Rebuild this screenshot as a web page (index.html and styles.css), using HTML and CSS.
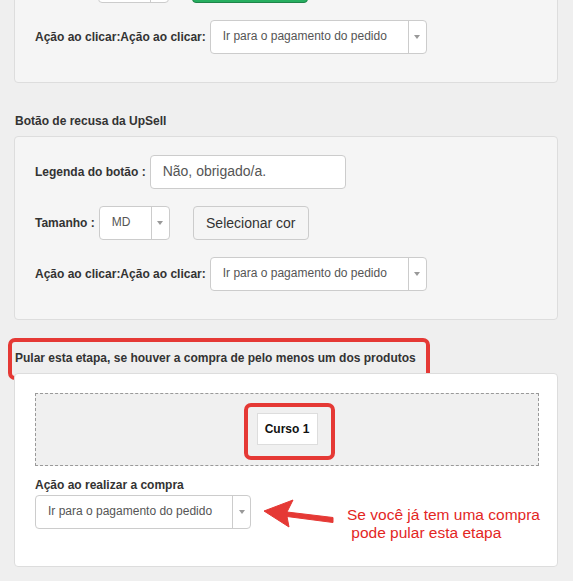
FILE: index.html
```html
<!DOCTYPE html>
<html lang="pt">
<head>
<meta charset="utf-8">
<title>UpSell</title>
<link rel="stylesheet" href="styles.css">
</head>
<body>
<div class="page">
  <div class="panel panel-top">
    <div class="rows">
      <div class="row">
        <span class="label label-spacer"></span>
        <div class="select select-sm"><span class="select-value"></span><span class="select-caret"><i class="caret"></i></span></div>
        <span class="btn btn-green"></span>
      </div>
      <div class="row">
        <span class="label">Ação ao clicar:Ação ao clicar:</span>
        <div class="select select-wide"><span class="select-value">Ir para o pagamento do pedido</span><span class="select-caret"><i class="caret"></i></span></div>
      </div>
    </div>
  </div>

  <div class="section-title">Botão de recusa da UpSell</div>
  <div class="panel">
    <div class="rows">
      <div class="row">
        <span class="label">Legenda do botão :</span>
        <div class="input">Não, obrigado/a.</div>
      </div>
      <div class="row">
        <span class="label">Tamanho :</span>
        <div class="select select-sm"><span class="select-value">MD</span><span class="select-caret"><i class="caret"></i></span></div>
        <button class="btn">Selecionar cor</button>
      </div>
      <div class="row">
        <span class="label">Ação ao clicar:Ação ao clicar:</span>
        <div class="select select-wide"><span class="select-value">Ir para o pagamento do pedido</span><span class="select-caret"><i class="caret"></i></span></div>
      </div>
    </div>
  </div>

  <div class="section-title annotated">Pular esta etapa, se houver a compra de pelo menos um dos produtos<span class="mark mark-title"></span></div>
  <div class="panel panel-white">
    <div class="dropzone">
      <div class="chip">Curso 1<span class="mark mark-chip"></span></div>
    </div>
    <div class="label label-block">Ação ao realizar a compra</div>
    <div class="select select-bottom"><span class="select-value">Ir para o pagamento do pedido</span><span class="select-caret"><i class="caret"></i></span></div>

    <svg class="arrow" width="85" height="35" viewBox="0 0 85 35" aria-hidden="true">
      <polygon points="9,16 38,5 32,17 78,22.5 78,27.5 32,21.5 34,32" fill="#e53935" stroke="#e53935" stroke-width="1" stroke-linejoin="round"/>
    </svg>
    <div class="note">Se você já tem uma compra<br>&nbsp;pode pular esta etapa</div>
  </div>
</div>
</body>
</html>
```

FILE: styles.css
```css
html, body {
  margin: 0;
  background: #efefef;
  overflow: hidden;
}

body {
  font-family: "Liberation Sans", Arial, sans-serif;
  font-size: 12px;
  color: #333;
}

.page {
  padding: 0 15px 0 14px;
}

.panel {
  background: #f5f5f5;
  border: 1px solid #ddd;
  border-radius: 4px;
  padding: 18px 18px 28px 20px;
}

.panel-top {
  margin-top: -50px;
}

.rows {
  display: flex;
  flex-direction: column;
  gap: 17px;
}

.row {
  display: flex;
  align-items: center;
  height: 34px;
}

.label {
  font-weight: bold;
  margin-right: 4px;
  color: #333;
}

.label-spacer {
  width: 59px;
}

.select {
  display: flex;
  height: 34px;
  box-sizing: border-box;
  border: 1px solid #ccc;
  border-radius: 4px;
  background: #fff;
}

.select-value {
  flex: 1;
  padding-left: 12px;
  line-height: 30px;
  color: #555;
  white-space: nowrap;
  overflow: hidden;
}

.select-caret {
  width: 18px;
  box-sizing: border-box;
  border-left: 1px solid #ccc;
  display: flex;
  align-items: center;
  justify-content: center;
}

.caret {
  width: 0;
  height: 0;
  border-top: 4px solid #999;
  border-left: 3px solid transparent;
  border-right: 3px solid transparent;
}

.select-sm {
  width: 71px;
}

.select-wide {
  width: 217px;
}

.select-bottom {
  width: 216px;
}

.btn {
  display: block;
  margin-left: 23px;
  width: 116px;
  height: 34px;
  box-sizing: border-box;
  border: 1px solid #ccc;
  border-radius: 4px;
  background: #f5f5f5;
  font-family: inherit;
  font-size: 14px;
  color: #333;
  padding: 0;
}

.btn-green {
  background: #27ae60;
  border-color: #1e8449;
}

.input {
  width: 196px;
  height: 34px;
  box-sizing: border-box;
  border: 1px solid #ccc;
  border-radius: 4px;
  background: #fff;
  padding-left: 12px;
  font-size: 14px;
  line-height: 31px;
  color: #555;
}

.section-title {
  margin: 30px 0 7px;
  padding-left: 1px;
  font-weight: bold;
  line-height: 16px;
  color: #333;
}

.annotated {
  position: relative;
}

.mark {
  position: absolute;
  box-sizing: border-box;
  border: 4px solid #e53935;
  border-radius: 7px;
  pointer-events: none;
}

.mark-title {
  left: -6px;
  top: -12px;
  width: 422px;
  height: 42px;
}

.panel-white {
  position: relative;
  background: #fff;
  padding: 19px 18px 37px 20px;
}

.dropzone {
  display: flex;
  justify-content: center;
  border: 1px dashed #999;
  background: #f0f0f0;
  padding: 19px 0 20px;
}

.chip {
  position: relative;
  width: 61px;
  height: 32px;
  box-sizing: border-box;
  background: #fff;
  border: 1px solid #ddd;
  text-align: center;
  line-height: 30px;
  font-weight: bold;
  color: #111;
}

.mark-chip {
  left: -14px;
  top: -11px;
  width: 91px;
  height: 57px;
}

.label-block {
  display: block;
  margin: 11px 0 2px;
  line-height: 16px;
}

.arrow {
  position: absolute;
  left: 240px;
  top: 121px;
}

.note {
  position: absolute;
  left: 332px;
  top: 132px;
  font-size: 15.5px;
  line-height: 18px;
  color: #e3261f;
  white-space: nowrap;
}
```
